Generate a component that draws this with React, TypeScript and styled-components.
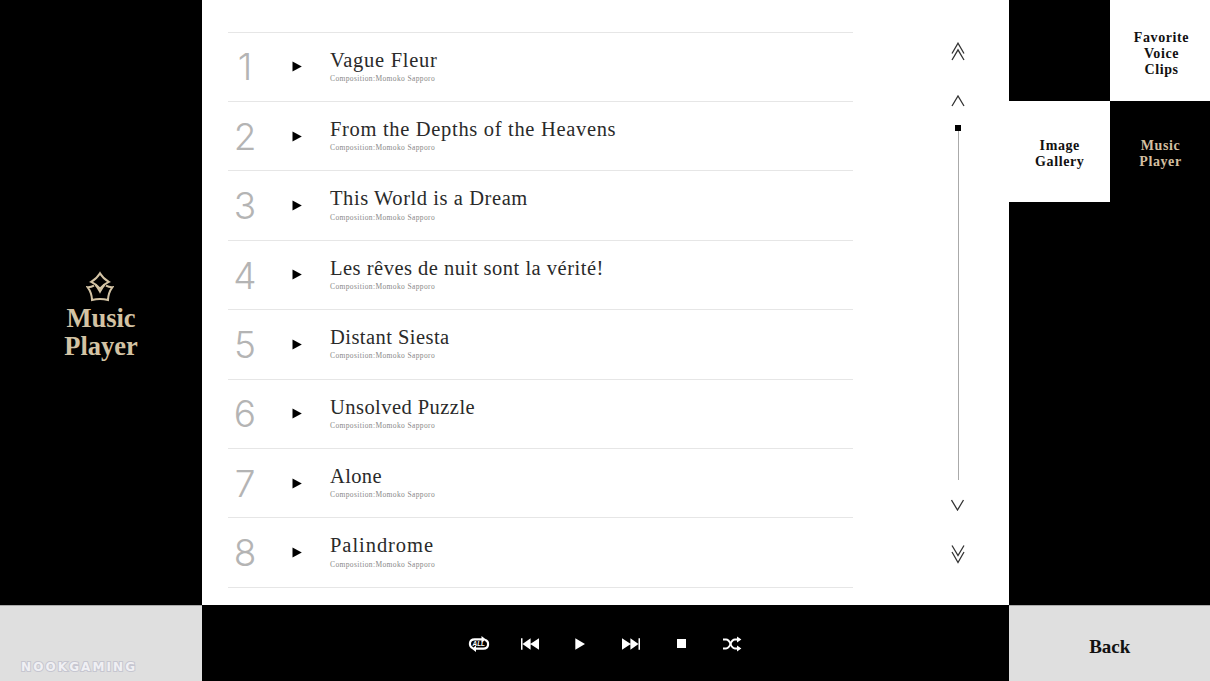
import { useState } from "react";
import styled, { createGlobalStyle } from "styled-components";

type Track = {
  title: string;
  spacing: number;
};

// spacing: tracking in px, tuned per title
const tracks: Track[] = [
  { title: "Vague Fleur", spacing: 0.72 },
  { title: "From the Depths of the Heavens", spacing: 0.68 },
  { title: "This World is a Dream", spacing: 0.57 },
  { title: "Les rêves de nuit sont la vérité!", spacing: 0.5 },
  { title: "Distant Siesta", spacing: 0.45 },
  { title: "Unsolved Puzzle", spacing: 0.45 },
  { title: "Alone", spacing: 0.35 },
  { title: "Palindrome", spacing: 0.95 },
];

export default function App() {
  const [current, setCurrent] = useState(0);

  return (
    <Screen>
      <GlobalStyle />

      <TitlePanel>
        <Emblem />
        <PanelTitle>
          Music
          <br />
          Player
        </PanelTitle>
      </TitlePanel>

      <Main>
        <TrackList>
          {tracks.map((track, index) => (
            <TrackRow
              key={track.title}
              aria-current={index === current}
              onClick={() => setCurrent(index)}
            >
              <TrackNumber>{index + 1}</TrackNumber>
              <PlayMark width="10" height="11" viewBox="0 0 10 11">
                <path d="M0.5 0.5L9.8 5.5L0.5 10.5Z" fill="#000" />
              </PlayMark>
              <TrackInfo>
                <TrackTitle $spacing={track.spacing}>{track.title}</TrackTitle>
                <Composer>Composition:Momoko Sapporo</Composer>
              </TrackInfo>
            </TrackRow>
          ))}
        </TrackList>

        <Scroller>
          <ScrollButton aria-label="First page" $height={20}>
            <svg width="14" height="20" viewBox="0 0 14 20">
              <path d="M1 11.5L7 1.2L13 11.5M1 18L7 7.8L13 18" />
            </svg>
          </ScrollButton>
          <ScrollButton aria-label="Previous" $height={12} $top={33}>
            <svg width="14" height="12" viewBox="0 0 14 12">
              <path d="M1 11L7 1L13 11" />
            </svg>
          </ScrollButton>
          <ScrollThumb />
          <ScrollTrack />
          <ScrollButton aria-label="Next" $height={12} $top={19}>
            <svg width="14" height="12" viewBox="0 0 14 12">
              <path d="M0.5 1L6.5 11L12.5 1" />
            </svg>
          </ScrollButton>
          <ScrollButton aria-label="Last page" $height={20} $top={33}>
            <svg width="14" height="20" viewBox="0 0 14 20">
              <path d="M1 1.5L7 11.5L13 1.5M1 8L7 18.5L13 8" />
            </svg>
          </ScrollButton>
        </Scroller>
      </Main>

      <Tabs>
        <Tab $tone="dark" />
        <Tab $tone="light">
          Favorite
          <br />
          Voice
          <br />
          Clips
        </Tab>
        <Tab $tone="light">
          Image
          <br />
          Gallery
        </Tab>
        <Tab $tone="active">
          Music
          <br />
          Player
        </Tab>
      </Tabs>

      <BrandCell>
        <Brand>NOOKGAMING</Brand>
      </BrandCell>

      <Controls>
        <ControlButton aria-label="Repeat all">
          <svg width="22" height="16" viewBox="0 0 22 16">
            <g fill="none" stroke="#fff" strokeWidth="2.2">
              <path d="M5 12.2C0.6 10.5 0.8 3.4 6.5 3.4H15" />
              <path d="M17 3.8C21.4 5.5 21.2 12.6 15.5 12.6H7" />
            </g>
            <path d="M13.5 0L18 3.4L13.5 6.6ZM8 9.4L3.8 12.8L8 16Z" fill="#fff" />
            <text
              x="10.8"
              y="10.4"
              textAnchor="middle"
              fontFamily="Liberation Sans, sans-serif"
              fontSize="6.4"
              fontWeight="700"
              fontStyle="italic"
              fill="#fff"
            >
              ALL
            </text>
          </svg>
        </ControlButton>
        <ControlButton aria-label="Previous track">
          <svg width="18" height="12" viewBox="0 0 18 12">
            <path d="M0 0.2H1.5V11.8H0ZM9.6 0.2V11.8L1.5 6ZM18 0.2V11.8L9.2 6Z" fill="#fff" />
          </svg>
        </ControlButton>
        <ControlButton aria-label="Play">
          <svg width="10" height="12" viewBox="0 0 10 12">
            <path d="M0.3 0.3L10 6L0.3 11.7Z" fill="#fff" />
          </svg>
        </ControlButton>
        <ControlButton aria-label="Next track">
          <svg width="18" height="12" viewBox="0 0 18 12">
            <path d="M18 0.2H16.5V11.8H18ZM8.4 0.2V11.8L16.5 6ZM0 0.2V11.8L8.8 6Z" fill="#fff" />
          </svg>
        </ControlButton>
        <ControlButton aria-label="Stop">
          <StopSquare />
        </ControlButton>
        <ControlButton aria-label="Shuffle">
          <svg width="20" height="16" viewBox="0 0 20 16">
            <g fill="none" stroke="#fff" strokeWidth="2">
              <path d="M1 3.6H4C9.5 3.6 7.5 12.4 13 12.4H16" />
              <path d="M1 12.4H4C9.5 12.4 7.5 3.6 13 3.6H16" />
            </g>
            <path d="M15 0.6L19.4 3.6L15 6.6ZM15 9.4L19.4 12.4L15 15.4Z" fill="#fff" />
          </svg>
        </ControlButton>
      </Controls>

      <BackButton>Back</BackButton>
    </Screen>
  );
}

function Emblem() {
  return (
    <svg width="28" height="31" viewBox="0 0 28 31" fill="none" stroke="#d3c3a4" strokeWidth="2">
      <path d="M14 2.2Q17 7.4 22.8 10.8Q17.6 13.2 14 17.6Q10.4 13.2 5.2 10.8Q11 7.4 14 2.2Z" />
      <path d="M8 14.6Q5 16.4 1.6 16.2Q5.8 22 6 29Q14 26.8 22 29Q22.2 22 26.4 16.2Q23 16.4 20 14.6" />
      <path d="M9.4 13.8Q12 16.6 14 20.6Q16 16.6 18.6 13.8" />
    </svg>
  );
}

const GlobalStyle = createGlobalStyle`
  * {
    box-sizing: border-box;
  }

  body {
    margin: 0;
    background: #000;
    font-family: "Liberation Serif", serif;
  }

  button {
    border: 0;
    padding: 0;
    background: none;
    font-family: inherit;
    cursor: pointer;
  }

  svg {
    display: block;
  }
`;

const Screen = styled.div`
  display: grid;
  grid-template-columns: 202px 806.5px 1fr;
  grid-template-rows: 605px 1fr;
  width: 1210px;
  height: 681px;
  overflow: hidden;
  background: #000;
`;

const TitlePanel = styled.aside`
  display: flex;
  flex-direction: column;
  align-items: center;
  padding-top: 271px;
  padding-right: 2px;
  color: #d3c3a4;
`;

const PanelTitle = styled.h1`
  margin: 2px 0 0 2px;
  font-size: 26.5px;
  font-weight: 700;
  line-height: 28px;
  text-align: center;
`;

const Main = styled.main`
  display: flex;
  align-items: flex-start;
  background: #fff;
`;

const TrackList = styled.ol`
  display: flex;
  flex-direction: column;
  width: 625px;
  height: 556px;
  margin: 31.7px 0 0 26px;
  padding: 0;
  list-style: none;
  border-bottom: 1px solid #e6e6e6;
`;

const TrackRow = styled.li`
  display: flex;
  flex: 1;
  align-items: flex-start;
  border-top: 1px solid #e6e6e6;
  cursor: pointer;
`;

const TrackNumber = styled.span`
  width: 34px;
  margin-top: 14.8px;
  color: #b4b4b4;
  font-family: Inter, "Liberation Sans", sans-serif;
  font-size: 37px;
  font-weight: 300;
  line-height: 40px;
  text-align: center;
`;

const PlayMark = styled.svg`
  margin: 28.6px 0 0 30px;
`;

const TrackInfo = styled.div`
  margin: 15px 0 0 28px;
`;

const TrackTitle = styled.div<{ $spacing: number }>`
  color: #2a2a2a;
  font-size: 20.5px;
  line-height: 24px;
  letter-spacing: ${({ $spacing }) => $spacing}px;
  white-space: nowrap;
`;

const Composer = styled.div`
  margin-top: 2.3px;
  color: #888;
  font-size: 7.5px;
  line-height: 9px;
  letter-spacing: 0.38px;
`;

const Scroller = styled.div`
  display: flex;
  flex-direction: column;
  align-items: center;
  margin: 42px 0 0 98px;
`;

const ScrollButton = styled.button<{ $height: number; $top?: number }>`
  width: 14px;
  height: ${({ $height }) => $height}px;
  margin-top: ${({ $top = 0 }) => $top}px;

  path {
    fill: none;
    stroke: #333;
    stroke-width: 1.3;
  }
`;

const ScrollThumb = styled.div`
  width: 6px;
  height: 6px;
  margin-top: 18px;
  background: #000;
`;

const ScrollTrack = styled.div`
  width: 1px;
  height: 349px;
  margin-left: 1px;
  background: #aaa;
`;

const Tabs = styled.nav`
  display: grid;
  grid-template-columns: 101.5px 1fr;
  grid-template-rows: 101px 101px;
`;

const tones = {
  dark: { background: "#000", color: "#fff" },
  light: { background: "#fff", color: "#111" },
  active: { background: "#000", color: "#d3bfa0" },
};

const Tab = styled.button<{ $tone: keyof typeof tones }>`
  padding: 5px 0 0 1px;
  background: ${({ $tone }) => tones[$tone].background};
  color: ${({ $tone }) => tones[$tone].color};
  font-size: 14px;
  font-weight: 700;
  line-height: 16px;
  letter-spacing: 0.6px;

  &:nth-child(2) {
    padding: 7px 0 0 3px;
  }
`;

const BrandCell = styled.div`
  display: flex;
  align-items: flex-end;
  padding: 0 0 8px 21px;
  border-top: 1px solid #aaa;
  background: #dfdfdf;
`;

const Brand = styled.span`
  color: #f0f0f4;
  font-family: "DejaVu Sans", sans-serif;
  font-size: 12px;
  font-weight: 700;
  line-height: 12px;
  letter-spacing: 2.1px;
  -webkit-text-stroke: 2px #c6c6d0;
  paint-order: stroke fill;
`;

const Controls = styled.div`
  display: flex;
  align-items: center;
  justify-content: center;
  padding: 1px 0 0 1px;
  background: #000;
`;

const ControlButton = styled.button`
  display: flex;
  align-items: center;
  justify-content: center;
  width: 50.6px;
  height: 40px;
`;

const StopSquare = styled.span`
  width: 9px;
  height: 9px;
  background: #fff;
`;

const BackButton = styled.button`
  padding: 6px 0 0 1px;
  border-top: 1px solid #aaa;
  background: #dfdfdf;
  color: #111;
  font-size: 19px;
  font-weight: 700;
`;
